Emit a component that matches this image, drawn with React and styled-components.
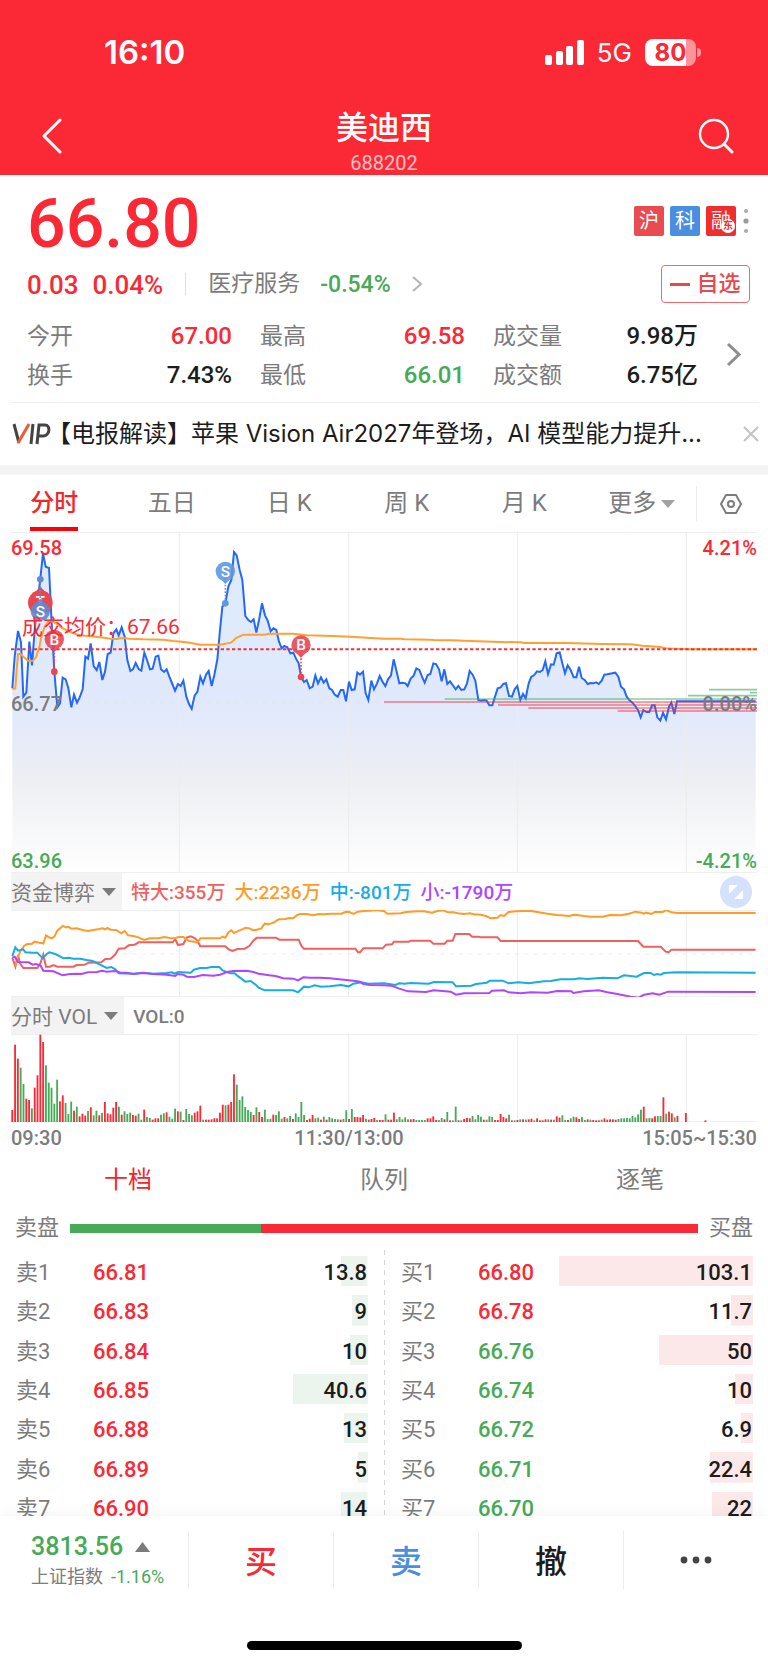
import React, { useState } from 'react';
import styled, { createGlobalStyle } from 'styled-components';

const RED = '#fa2935';
const GREEN = '#46aa58';
const GREY = '#7c7c7c';
const BLACK = '#1c1c1c';

const stats = [
  { label: '今开', value: '67.00', color: RED },
  { label: '最高', value: '69.58', color: RED },
  { label: '成交量', value: '9.98万', color: BLACK },
  { label: '换手', value: '7.43%', color: BLACK },
  { label: '最低', value: '66.01', color: GREEN },
  { label: '成交额', value: '6.75亿', color: BLACK },
];

const periods = ['分时', '五日', '日 K', '周 K', '月 K'];
const bookTabs = ['十档', '队列', '逐笔'];

const flows = [
  { text: '特大:355万', color: '#f0605f' },
  { text: '大:2236万', color: '#ff9b26' },
  { text: '中:-801万', color: '#16ace4' },
  { text: '小:-1790万', color: '#b045ff' },
];

const asks = [
  ['卖1', '66.81', 13.8, RED],
  ['卖2', '66.83', 9, RED],
  ['卖3', '66.84', 10, RED],
  ['卖4', '66.85', 40.6, RED],
  ['卖5', '66.88', 13, RED],
  ['卖6', '66.89', 5, RED],
  ['卖7', '66.90', 14, RED],
];

const bids = [
  ['买1', '66.80', 103.1, RED],
  ['买2', '66.78', 11.7, RED],
  ['买3', '66.76', 50, GREEN],
  ['买4', '66.74', 10, GREEN],
  ['买5', '66.72', 6.9, GREEN],
  ['买6', '66.71', 22.4, GREEN],
  ['买7', '66.70', 22, GREEN],
];

const MAX_LOT = 103.1;

// Chart series, three units to one css pixel
const pricePoints = '37,655 44,560 54,483 63,517 70,680 79,668 88,515 96,586 104,480 112,400 121,325 129,250 137,290 147,294 154,440 163,605 172,712 180,700 188,623 197,628 205,655 214,712 222,674 231,698 239,682 248,658 256,560 264,566 272,520 281,588 290,600 298,576 307,630 315,605 323,552 332,548 340,490 349,478 356,496 365,472 374,500 382,570 391,603 399,598 407,579 416,597 424,602 433,548 441,570 450,598 458,596 467,560 475,557 483,598 492,606 500,598 508,620 517,642 525,662 534,642 542,648 550,632 559,680 567,702 575,716 584,676 592,666 601,620 609,640 618,614 626,603 635,648 643,615 652,568 660,480 667,410 676,400 685,350 694,330 702,246 710,256 719,300 727,330 736,438 745,450 753,456 761,448 769,488 777,450 786,400 795,436 803,452 812,484 820,475 829,480 837,515 845,535 853,528 862,532 871,550 880,548 888,566 896,580 903,620 912,636 920,630 929,655 938,650 946,616 954,640 963,622 971,638 979,628 988,655 996,660 1004,674 1013,680 1022,660 1030,660 1038,694 1047,635 1055,660 1064,658 1072,608 1080,614 1089,605 1097,670 1105,690 1114,632 1122,658 1131,640 1139,618 1148,636 1156,648 1164,628 1173,616 1181,568 1190,605 1198,640 1207,638 1216,640 1223,648 1232,626 1241,617 1249,595 1258,600 1266,620 1274,638 1283,615 1291,612 1300,580 1308,582 1317,598 1325,634 1333,598 1342,642 1350,634 1358,645 1367,658 1375,648 1384,660 1393,658 1401,640 1409,603 1418,614 1426,632 1435,690 1443,692 1452,690 1460,692 1468,706 1477,706 1485,680 1493,655 1502,652 1510,642 1518,640 1527,678 1536,680 1544,658 1552,648 1561,690 1569,672 1577,685 1586,640 1594,620 1602,616 1611,604 1620,606 1628,600 1636,574 1644,612 1653,583 1661,584 1670,550 1679,547 1687,580 1695,610 1703,586 1712,600 1721,622 1729,622 1737,590 1745,624 1754,630 1763,642 1772,639 1780,640 1788,637 1796,642 1805,632 1813,614 1822,613 1846,608 1855,620 1863,650 1872,658 1880,680 1888,690 1897,698 1906,708 1914,720 1922,742 1930,720 1939,726 1948,726 1956,706 1964,706 1972,742 1981,752 1989,728 1998,748 2007,710 2014,698 2023,732 2031,694 2267,694';

const averagePoints = '37,657 46,655 50,600 54,552 62,552 72,562 84,572 98,573 108,562 118,532 124,500 134,470 146,454 156,454 168,460 186,474 210,486 240,496 272,499 300,502 332,506 350,507 365,504 390,506 430,508 490,509 520,513 545,515 570,518 600,524 660,524 693,518 708,504 730,494 795,494 806,491 880,491 920,496 1000,498 1050,500 1152,506 1202,506 1214,508 1292,509 1302,510 1357,511 1412,513 1502,516 1562,517 1572,519 1702,519 1807,522 1892,523 1927,527 1952,529 1980,531 1997,535 2022,536 2072,538 2271,538';

const flowSeries = [
  { color: '#f0605f', points: '37,773 46,800 54,765 60,790 70,804 112,804 121,790 130,764 138,800 150,800 160,795 172,800 220,800 230,795 254,794 266,788 304,787 316,777 332,776 346,763 356,746 374,745 386,736 404,734 416,727 518,727 526,718 534,735 550,732 560,713 572,709 584,714 592,722 601,739 676,739 686,748 697,753 712,747 734,746 748,738 760,722 770,713 828,713 838,719 896,719 904,738 912,746 1066,746 1074,757 1080,757 1090,745 1148,745 1158,734 1176,733 1182,725 1227,725 1232,722 1290,722 1300,731 1334,731 1342,722 1358,722 1366,702 1408,702 1416,710 1436,710 1442,712 1492,712 1502,723 1914,723 1930,740 1982,740 1997,755 2006,757 2014,749 2267,749' },
  { color: '#ff9b26', points: '45,800 54,770 62,752 72,738 80,733 96,731 104,725 118,728 130,730 138,706 147,712 155,715 163,710 172,692 180,685 189,678 197,682 206,681 214,686 230,685 248,690 264,693 280,690 298,687 308,685 316,688 322,684 332,689 348,690 364,700 374,693 384,706 400,708 415,712 432,720 450,715 476,715 492,711 510,714 524,715 535,711 550,711 565,722 580,725 592,728 601,715 660,715 668,710 676,713 686,696 694,691 702,699 712,694 726,688 737,683 748,685 758,690 768,690 784,685 794,671 806,673 822,667 836,658 856,657 868,654 880,655 890,646 900,642 920,642 940,646 956,642 972,643 990,641 1024,641 1036,636 1046,635 1060,642 1074,635 1090,633 1110,632 1124,630 1152,633 1162,641 1202,640 1218,636 1252,634 1272,634 1296,638 1312,633 1330,631 1344,637 1360,637 1374,640 1392,642 1410,640 1422,643 1442,644 1458,648 1472,655 1492,653 1502,645 1512,648 1526,636 1547,634 1588,632 1612,636 1642,641 1672,645 1708,648 1722,644 1736,646 1752,648 1772,650 1808,650 1830,645 1862,646 1887,641 1907,635 1924,638 1932,641 1938,638 1954,642 1964,636 1988,636 1999,630 2014,637 2032,639 2267,639' },
  { color: '#16ace4', points: '37,768 46,742 54,752 70,748 76,757 98,758 112,758 128,775 140,762 148,757 166,762 180,769 190,775 206,773 220,776 240,776 260,780 278,783 300,794 320,804 334,801 346,808 356,820 400,821 430,818 460,821 500,819 516,817 524,821 534,816 572,818 582,809 600,804 620,804 634,801 658,801 668,811 690,820 704,820 712,827 736,845 752,843 768,855 776,863 794,871 880,871 894,877 912,860 926,862 944,856 964,860 990,859 1022,855 1046,859 1060,851 1084,847 1106,851 1152,850 1186,855 1198,850 1214,851 1232,849 1286,851 1302,846 1358,847 1368,859 1414,857 1428,852 1460,848 1470,842 1508,842 1526,850 1556,847 1586,850 1632,844 1652,843 1682,838 1722,838 1738,835 1762,837 1808,833 1852,835 1872,826 1910,830 1932,819 1952,819 1962,825 1972,822 1982,824 1992,819 2028,817 2267,818' },
  { color: '#b045ff', points: '37,773 44,770 54,786 86,787 98,794 108,792 122,797 130,812 160,814 188,826 210,822 232,821 244,822 264,817 290,816 306,812 320,815 346,813 362,818 380,818 400,822 430,819 460,822 500,824 526,828 532,822 550,824 560,830 582,831 608,825 640,827 660,824 684,815 700,813 740,812 760,816 776,821 808,826 826,828 850,835 880,836 894,841 910,832 930,833 960,833 990,835 1010,837 1060,842 1080,845 1090,852 1110,855 1152,856 1174,857 1198,866 1224,874 1278,876 1302,871 1352,875 1368,884 1392,880 1468,879 1476,872 1512,871 1526,877 1562,880 1592,877 1642,878 1672,873 1714,874 1720,879 1752,874 1796,871 1822,877 1852,882 1892,890 1916,893 1932,884 1958,880 1978,884 2004,875 2267,876' },
];

// One bar per minute: r = up, g = down, followed by the bar height
const volumes = (
  'r36 r232 r190 g163 g114 r70 r66 g41 r103 r140 r262 r240 g170 g118 g103 g55 g127 r62 r80 g57 g24 g61 r34 g46 r17 r25 r19 g33 r44 g20 ' +
  'g34 r20 g27 r60 r26 r23 r43 r60 g46 r22 g32 g24 g28 r21 r19 g25 g7 r37 g15 g12 r7 r11 r11 g22 g26 r29 g16 g10 g40 r32 ' +
  'g31 r6 g39 g24 g20 r28 r32 r49 g7 r7 r7 r8 r11 r11 r28 r52 g50 r52 r60 r143 g112 g66 g77 g45 g36 g30 r21 g44 r30 r15 ' +
  'g37 g9 g10 r22 g21 g32 g10 r15 g11 g18 r9 g26 g15 g60 g21 r6 r10 r21 g11 g13 r7 g16 r7 g15 g11 g9 g8 r7 g9 g35 ' +
  'r9 g39 r15 r15 r14 r21 g10 r7 r9 r12 g6 r6 r6 g23 r7 r7 r28 g8 g15 g8 g14 g8 r8 r9 g6 g6 g6 g6 r11 r11 ' +
  'r17 r6 g6 g12 r8 g30 r5 g5 g46 r5 g5 r9 r12 r11 g18 g8 g21 g16 r7 g7 g17 g15 r6 r6 r24 r15 r11 g22 r5 g5 ' +
  'r6 g8 r8 g7 r8 r10 g5 r11 r5 r5 r8 g8 r7 g7 r17 r13 g20 g6 r6 g11 g16 r14 r9 g15 g6 r8 g7 r6 r5 r5 ' +
  'g7 r11 r7 r8 r8 r7 g9 g11 g11 g12 g11 g18 g14 g23 g37 r46 g11 g12 r11 r17 g18 g18 r74 g25 r31 r26 g14 r18 r0 r0 ' +
  'r27 r0 r0 r0 r0 r0 r0 r5'
).split(' ');

const depthLines = [
  { x: 2127, y: 659, color: GREEN },
  { x: 2250, y: 668, color: GREEN },
  { x: 2064, y: 677, color: GREEN },
  { x: 1334, y: 687, color: GREEN },
  { x: 1152, y: 696, color: RED },
  { x: 1494, y: 705, color: RED },
  { x: 1585, y: 714, color: RED },
  { x: 1853, y: 723, color: RED },
];

const GlobalStyle = createGlobalStyle`
  *, *::before, *::after {
    box-sizing: border-box;
  }

  html, body {
    margin: 0;
    background: #fff;
    font-family: Roboto, "Noto Sans CJK SC", sans-serif;
    color: ${BLACK};
  }

  button {
    padding: 0;
    border: none;
    background: none;
    font: inherit;
    color: inherit;
    cursor: pointer;
  }

  svg {
    display: block;
  }
`;

const Page = styled.div`
  display: flex;
  flex-direction: column;
  height: 100vh;
`;

const Header = styled.header`
  flex: none;
  background: ${RED};
  color: #fff;
`;

const StatusBar = styled.div`
  display: flex;
  align-items: center;
  justify-content: space-between;
  height: 104px;
  padding: 0 67px 0 104px;
  font-family: Inter, sans-serif;
`;

const Clock = styled.span`
  font-size: 33px;
  font-weight: 600;
`;

const StatusIcons = styled.div`
  display: flex;
  align-items: center;
  gap: 13px;
  font-size: 26px;
`;

const Battery = styled.div`
  display: flex;
  align-items: center;
  gap: 1px;
`;

const BatteryBody = styled.span`
  display: flex;
  align-items: center;
  justify-content: center;
  width: 51px;
  height: 27px;
  border-radius: 8px;
  background: linear-gradient(to right, #fff 80%, rgba(255, 255, 255, 0.5) 80%);
  color: ${RED};
  font-size: 24px;
  font-weight: 700;
`;

const BatteryTip = styled.span`
  width: 4px;
  height: 9px;
  border-radius: 0 4px 4px 0;
  background: rgba(255, 255, 255, 0.5);
`;

const NavBar = styled.div`
  display: grid;
  grid-template-columns: 60px 1fr 60px;
  padding: 0 22px 3px;
`;

const NavButton = styled.button`
  display: flex;
  align-items: center;
  justify-content: center;
  height: 64px;
`;

const NavTitle = styled.div`
  padding-top: 4px;
  text-align: center;
`;

const StockName = styled.h1`
  margin: 0;
  font-size: 32px;
  font-weight: 500;
  line-height: 40px;
`;

const StockCode = styled.div`
  height: 24px;
  padding-top: 3px;
  font-size: 20px;
  line-height: 24px;
  opacity: 0.7;
`;

const Content = styled.main`
  flex: 1;
  min-height: 0;
  overflow-y: auto;
  scrollbar-width: none;
`;

const Quote = styled.section`
  padding: 0 18px 0 27px;
`;

const QuoteTop = styled.div`
  display: flex;
  align-items: center;
  justify-content: space-between;
  height: 90px;
`;

const Price = styled.div`
  padding-top: 8px;
  font-size: 68px;
  font-weight: 500;
  line-height: 82px;
  color: ${RED};
`;

const Badges = styled.div`
  display: flex;
  align-items: center;
  gap: 6px;
  padding-top: 2px;
`;

const Badge = styled.span`
  position: relative;
  width: 30px;
  height: 30px;
  border-radius: 2px;
  background: ${({ $color }) => $color};
  color: #fff;
  font-size: 20px;
  line-height: 30px;
  text-align: center;
`;

const BadgeMark = styled.span`
  position: absolute;
  right: 1px;
  bottom: 3px;
  width: 14px;
  height: 14px;
  border-radius: 50%;
  background: #fff;
  color: #f02e2e;
  font-size: 10px;
  font-weight: 700;
  line-height: 14px;
`;

const MoreDots = styled.button`
  display: flex;
  justify-content: center;
  width: 8px;
`;

const ChangeRow = styled.div`
  display: flex;
  align-items: center;
  height: 38px;
`;

const Change = styled.span`
  margin-right: 14px;
  padding-top: 2px;
  font-size: 26px;
  font-weight: 500;
  color: ${RED};
`;

const Sector = styled.a`
  display: flex;
  align-items: center;
  gap: 20px;
  margin-left: 8px;
  padding-left: 23px;
  background: linear-gradient(#ddd, #ddd) left / 1px 22px no-repeat;
  color: ${GREY};
  font-size: 23px;
  line-height: 32px;
  text-decoration: none;
`;

const SectorChange = styled.span`
  padding-top: 2px;
  color: ${GREEN};
  font-weight: 500;
`;

const WatchButton = styled.button`
  display: flex;
  align-items: center;
  justify-content: center;
  gap: 6px;
  width: 89px;
  height: 38px;
  margin-left: auto;
  border: 1px solid #ee6a6e;
  border-radius: 4px;
  color: #e9484e;
  font-size: 22px;
  font-weight: 500;
  line-height: 36px;
`;

const StatsRow = styled.div`
  display: grid;
  grid-template-columns: 1fr 52px;
  align-items: center;
  padding: 12px 0 9px;
`;

const Stats = styled.dl`
  display: grid;
  grid-template-columns: repeat(3, 1fr);
  column-gap: 28px;
  margin: 0;
`;

const Stat = styled.div`
  display: flex;
  justify-content: space-between;
  height: 39px;
  padding-top: 2px;
  font-size: 23px;
  line-height: 39px;

  dt {
    color: ${GREY};
  }

  dd {
    margin: 0;
    font-size: 24px;
    font-weight: 500;
    color: ${({ $color }) => $color};
  }
`;

const StatsMore = styled.button`
  display: flex;
  justify-content: flex-end;
  padding-right: 9px;
`;

const News = styled.div`
  display: flex;
  align-items: center;
  height: 63px;
  margin: 0 9px 0 11px;
  border-top: 1px solid #efefef;
`;

const NewsLink = styled.a`
  flex: 1;
  overflow: hidden;
  margin: 0 22px 0 -4px;
  font-family: Inter, "Noto Sans CJK SC", sans-serif;
  font-size: 24px;
  line-height: 36px;
  white-space: nowrap;
  text-overflow: ellipsis;
  color: ${BLACK};
  text-decoration: none;
`;

const Band = styled.div`
  height: 10px;
  background: #f4f4f4;
`;

const PeriodBar = styled.nav`
  display: grid;
  grid-template-columns: 1fr 72px;
  height: 57px;
`;

const Periods = styled.div`
  display: grid;
  grid-template-columns: repeat(6, 1fr);
  column-gap: 9px;
`;

const Period = styled.button`
  display: flex;
  align-items: center;
  justify-content: center;
  gap: 5px;
  font-size: 24px;
  font-weight: ${({ $active }) => ($active ? 500 : 400)};
  color: ${({ $active }) => ($active ? '#f2252b' : GREY)};

  span {
    align-self: stretch;
    height: 56px;
    padding-top: 4px;
    border-bottom: 4px solid ${({ $active }) => ($active ? '#fc0006' : 'transparent')};
    line-height: 48px;
  }
`;

const Settings = styled.button`
  display: flex;
  align-items: center;
  justify-content: center;
  margin: 11px 0;
  padding-right: 4px;
  border-left: 1px solid #ececec;
`;

const ChartBlock = styled.section`
  margin: 0 11px;
`;

const PriceChart = styled.div`
  position: relative;

  svg {
    width: 100%;
    height: 341px;
  }
`;

const AxisLabel = styled.span`
  position: absolute;
  ${({ $side }) => $side}: 0;
  ${({ $edge }) => $edge};
  font-size: 20px;
  font-weight: 500;
  line-height: 24px;
  color: ${({ $color }) => $color};
`;

const CostLabel = styled.span`
  position: absolute;
  left: 11px;
  top: 81px;
  font-size: 21px;
  line-height: 28px;
  color: ${RED};
`;

const IndicatorRow = styled.div`
  display: flex;
  align-items: center;
  gap: 9px;
  height: 37px;
  padding-right: 5px;
  font-size: 19px;
`;

const IndicatorPicker = styled.button`
  display: flex;
  align-items: center;
  gap: 7px;
  align-self: stretch;
  padding-right: 6px;
  background: #f3f3f3;
  color: ${GREY};
  font-size: 21px;
  line-height: 36px;

  span {
    padding-top: 2px;
  }
`;

const FlowItem = styled.span`
  padding-top: 2px;
  font-weight: 500;
  line-height: 36px;
  color: ${({ $color }) => $color};
`;

const ExpandButton = styled.button`
  margin-left: auto;
`;

const SubChart = styled.svg`
  width: 100%;
  height: ${({ $height }) => $height}px;
`;

const TimeAxis = styled.div`
  display: flex;
  justify-content: space-between;
  padding-top: 1px;
  font-size: 20px;
  font-weight: 500;
  line-height: 30px;
  color: ${GREY};

  span {
    flex: 1;
  }

  span:nth-child(2) {
    padding-right: 70px;
    text-align: center;
  }

  span:nth-child(3) {
    text-align: right;
  }
`;

const BookTabs = styled.nav`
  display: grid;
  grid-template-columns: repeat(3, 1fr);
`;

const BookTab = styled.button`
  font-size: 24px;
  line-height: 54px;
  color: ${({ $active }) => ($active ? '#f2252b' : GREY)};
`;

const RatioRow = styled.div`
  display: flex;
  align-items: center;
  gap: 11px;
  padding: 2px 15px 0;
  font-size: 22px;
  line-height: 38px;
  color: ${GREY};
`;

const RatioBar = styled.div`
  display: flex;
  flex: 1;
  height: 9px;
  background: ${RED};
`;

const RatioSell = styled.div`
  background: ${GREEN};
`;

const Book = styled.section`
  display: grid;
  grid-template-columns: 1fr 1px 1fr;
  column-gap: 16px;
  padding: 0 15px 0 16px;
`;

const BookDivider = styled.div`
  margin-top: 3px;
  background: repeating-linear-gradient(#d6d6d6 0 5px, transparent 5px 10px);
`;

const BookTable = styled.table`
  width: 100%;
  height: 284px;
  table-layout: fixed;
  border-collapse: separate;
  border-spacing: 0 9px;
  font-size: 22px;
  line-height: 26px;

  th, td {
    height: 30px;
    padding: 4px 0 0;
    text-align: left;
  }

  th {
    width: 77px;
    font-weight: 400;
    color: ${GREY};
  }
`;

const PriceCell = styled.td`
  font-weight: 500;
  color: ${({ $color }) => $color};
`;

const LotCell = styled.td`
  width: 58%;
  background: linear-gradient(${({ $tint }) => `${$tint}, ${$tint}`}) right / ${({ $share }) => $share}% 100% no-repeat;

  && {
    padding-right: 1px;
    text-align: right;
    font-weight: 500;
  }
`;

const Footer = styled.footer`
  position: relative;
  flex: none;
  background: #fff;
  box-shadow: 0 -4px 12px rgba(0, 0, 0, 0.04);
`;

const Actions = styled.div`
  display: grid;
  grid-template-columns: 188px repeat(4, 1fr);
  padding: 15px 0 52px;
`;

const IndexQuote = styled.a`
  height: 58px;
  padding-left: 31px;
  color: ${GREEN};
  font-size: 18px;
  line-height: 28px;
  text-decoration: none;
`;

const IndexValue = styled.div`
  display: flex;
  align-items: center;
  gap: 12px;
  font-size: 25px;
  font-weight: 500;
  line-height: 32px;
`;

const IndexName = styled.span`
  margin-right: 8px;
  color: ${GREY};
`;

const Action = styled.button`
  display: flex;
  align-items: center;
  justify-content: center;
  border-left: 1px solid #ededed;
  font-size: 32px;
  font-weight: 500;
  line-height: 54px;
  color: ${({ $color }) => $color};

  span {
    padding-top: 4px;
  }
`;

const HomeIndicator = styled.div`
  width: 275px;
  height: 9px;
  margin: 0 auto 15px;
  border-radius: 5px;
  background: #000;
`;

const Chevron = ({ width, height, stroke, color }) => (
  <svg width={width} height={height} viewBox={`0 0 ${width} ${height}`} fill="none">
    <path d={`M2 2L${width - 2} ${height / 2}L2 ${height - 2}`} stroke={color} strokeWidth={stroke} />
  </svg>
);

const Caret = ({ color = GREY }) => (
  <svg width="14" height="8" viewBox="0 0 14 8">
    <path d="M0 0H14L7 8Z" fill={color} />
  </svg>
);

const gridXs = [538, 1046, 1552, 2059];

const Grid = ({ top, bottom }) => (
  <g stroke="#ececec" strokeWidth="3">
    <path d={`M33 ${top}H2271M33 ${bottom}H2271`} />
    {gridXs.map((x) => (
      <path key={x} d={`M${x} ${top}V${bottom}`} />
    ))}
  </g>
);

// Trade marker: a pin with a letter, tied to its price dot by a dotted line
const Marker = ({ x, y, dot, letter, color }) => {
  const dir = dot > y ? 1 : -1;
  return (
    <g>
      <path d={`M${x} ${y}V${dot}`} stroke={color} strokeWidth="5" strokeDasharray="5 5" />
      <circle cx={x} cy={dot} r="10" fill={color} />
      <g opacity="0.9">
        <circle cx={x} cy={y} r="29" fill={color} />
        <path d={`M${x - 20} ${y + 18 * dir}L${x} ${y + 38 * dir}L${x + 20} ${y + 18 * dir}Z`} fill={color} />
      </g>
      <text x={x} y={y + 16} fill="#fff" fontSize="46" fontWeight="500" textAnchor="middle">
        {letter}
      </text>
    </g>
  );
};

const OrderTable = ({ rows, tint, label }) => (
  <BookTable aria-label={label}>
    <tbody>
      {rows.map(([name, price, lots, color]) => (
        <tr key={name}>
          <th scope="row">{name}</th>
          <PriceCell $color={color}>{price}</PriceCell>
          <LotCell $tint={tint} $share={Math.round((lots / MAX_LOT) * 95)}>{lots}</LotCell>
        </tr>
      ))}
    </tbody>
  </BookTable>
);

const App = () => {
  const [period, setPeriod] = useState('分时');
  const [bookTab, setBookTab] = useState('十档');

  return (
    <>
      <GlobalStyle />
      <Page>
        <Header>
          <StatusBar>
            <Clock>16:10</Clock>
            <StatusIcons>
              <svg width="39" height="25" viewBox="0 0 39 25" fill="#fff">
                <rect x="0" y="15" width="7" height="10" rx="2" />
                <rect x="11" y="11" width="7" height="14" rx="2" />
                <rect x="21" y="6" width="7" height="19" rx="2" />
                <rect x="32" y="0" width="7" height="25" rx="2" />
              </svg>
              <span>5G</span>
              <Battery>
                <BatteryBody>80</BatteryBody>
                <BatteryTip />
              </Battery>
            </StatusIcons>
          </StatusBar>
          <NavBar>
            <NavButton aria-label="返回">
              <svg width="22" height="36" viewBox="0 0 22 36" fill="none">
                <path d="M19 2L3 18L19 34" stroke="#fff" strokeWidth="3" strokeLinecap="round" strokeLinejoin="round" />
              </svg>
            </NavButton>
            <NavTitle>
              <StockName>美迪西</StockName>
              <StockCode>688202</StockCode>
            </NavTitle>
            <NavButton aria-label="搜索">
              <svg width="36" height="36" viewBox="0 0 36 36" fill="none" stroke="#fff" strokeLinecap="round">
                <circle cx="16" cy="16" r="14" strokeWidth="2.4" />
                <path d="M26 26L34 34" strokeWidth="3" />
              </svg>
            </NavButton>
          </NavBar>
        </Header>

        <Content>
          <Quote>
            <QuoteTop>
              <Price>66.80</Price>
              <Badges>
                <Badge $color="#e94b50">沪</Badge>
                <Badge $color="#4a8ee2">科</Badge>
                <Badge $color="#f02e2e">融<BadgeMark>东</BadgeMark></Badge>
                <MoreDots aria-label="更多标签">
                  <svg width="6" height="24" viewBox="0 0 6 24" fill="#aaa">
                    <circle cx="3" cy="2" r="2" />
                    <circle cx="3" cy="12" r="2.6" fill="#999" />
                    <circle cx="3" cy="22" r="2" />
                  </svg>
                </MoreDots>
              </Badges>
            </QuoteTop>
            <ChangeRow>
              <Change>0.03</Change>
              <Change>0.04%</Change>
              <Sector href="#sector">
                <span>医疗服务</span>
                <SectorChange>-0.54%</SectorChange>
                <Chevron width={12} height={18} stroke={2} color="#b5b5b5" />
              </Sector>
              <WatchButton>
                <svg width="20" height="3" viewBox="0 0 20 3">
                  <path d="M0 0H20V3H0Z" fill="#e9484e" />
                </svg>
                自选
              </WatchButton>
            </ChangeRow>
            <StatsRow>
              <Stats>
                {stats.map((item) => (
                  <Stat key={item.label} $color={item.color}>
                    <dt>{item.label}</dt>
                    <dd>{item.value}</dd>
                  </Stat>
                ))}
              </Stats>
              <StatsMore aria-label="更多数据">
                <Chevron width={15} height={25} stroke={3} color="#8e8e8e" />
              </StatsMore>
            </StatsRow>
          </Quote>

          <News>
            <svg width="40" height="22" viewBox="0 0 40 22" fill="none" strokeWidth="3">
              <path d="M3 1L8 20" stroke="#444" />
              <path d="M7 20L18 1" stroke="#f05a38" />
              <path d="M22 1L20 21" stroke="#444" />
              <path d="M26 21L28 2H34C40 2 39 13 32 13H27" stroke="#444" />
            </svg>
            <NewsLink href="#news">【电报解读】苹果 Vision Air2027年登场，AI 模型能力提升...</NewsLink>
            <button aria-label="关闭">
              <svg width="16" height="16" viewBox="0 0 16 16" fill="none">
                <path d="M1 1L15 15M15 1L1 15" stroke="#c4c4c4" strokeWidth="2" />
              </svg>
            </button>
          </News>
          <Band />

          <PeriodBar>
            <Periods>
              {periods.map((name) => (
                <Period key={name} $active={name === period} onClick={() => setPeriod(name)}>
                  <span>{name}</span>
                </Period>
              ))}
              <Period>
                <span>更多</span>
                <Caret color="#a2a2a2" />
              </Period>
            </Periods>
            <Settings aria-label="设置">
              <svg width="22" height="20" viewBox="0 0 22 20" fill="none" stroke="#7c7c7c" strokeWidth="2">
                <path d="M6 1H16L21 10L16 19H6L1 10Z" strokeLinejoin="round" />
                <circle cx="11" cy="10" r="3" />
              </svg>
            </Settings>
          </PeriodBar>

          <ChartBlock>
            <PriceChart>
              <svg viewBox="33 186 2238 1023" preserveAspectRatio="none" fill="none">
                <defs>
                  <linearGradient id="area" gradientUnits="userSpaceOnUse" x1="0" y1="600" x2="0" y2="1209">
                    <stop offset="0" stopColor="#e0eafd" />
                    <stop offset="0.2" stopColor="#e1e9fb" />
                    <stop offset="0.55" stopColor="#eeeff3" />
                    <stop offset="1" stopColor="#ffffff" />
                  </linearGradient>
                </defs>
                <polygon points={`37,1209 ${pricePoints} 2267,1209`} fill="url(#area)" />
                <Grid top={187} bottom={1208} />
                <path d="M33 698H2271" stroke="#e2e4ea" strokeWidth="3" strokeDasharray="12 16" />
                <polyline points={pricePoints} stroke="#2468fb" strokeWidth="6" />
                <polyline points={averagePoints} stroke="#ffa033" strokeWidth="6" />
                <path d="M33 538H2271" stroke="#f0323c" strokeWidth="6" strokeDasharray="10 7" />
                {depthLines.map((line) => (
                  <path key={line.y} d={`M${line.x} ${line.y}H2271`} stroke={line.color} strokeWidth="5" opacity="0.6" />
                ))}
                <circle cx="121" cy="398" r="37" fill="#e8474f" />
                <path d="M97 374L121 350L145 374Z" fill="#e8474f" />
                <text x="121" y="412" fill="#fff" fontSize="44" fontWeight="700" textAnchor="middle">T</text>
                <Marker x={121} y={424} dot={328} letter="S" color="#5f8bd2" />
                <Marker x={163} y={508} dot={605} letter="B" color="#ea4650" />
                <Marker x={676} y={304} dot={400} letter="S" color="#5f97e3" />
                <Marker x={903} y={525} dot={621} letter="B" color="#ea4650" />
              </svg>
              <AxisLabel $side="left" $edge="top: 4px" $color={RED}>69.58</AxisLabel>
              <AxisLabel $side="right" $edge="top: 4px" $color={RED}>4.21%</AxisLabel>
              <AxisLabel $side="left" $edge="top: 160px" $color={GREY}>66.77</AxisLabel>
              <AxisLabel $side="right" $edge="top: 160px" $color={GREY}>0.00%</AxisLabel>
              <AxisLabel $side="left" $edge="bottom: 0" $color={GREEN}>63.96</AxisLabel>
              <AxisLabel $side="right" $edge="bottom: 0" $color={GREEN}>-4.21%</AxisLabel>
              <CostLabel>成交均价：67.66</CostLabel>
            </PriceChart>

            <IndicatorRow>
              <IndicatorPicker>
                <span>资金博弈</span>
                <Caret />
              </IndicatorPicker>
              {flows.map((flow) => (
                <FlowItem key={flow.text} $color={flow.color}>{flow.text}</FlowItem>
              ))}
              <ExpandButton aria-label="放大">
                <svg width="32" height="32" viewBox="0 0 32 32">
                  <circle cx="16" cy="16" r="16" fill="#d3e0fe" />
                  <path d="M9 9H18L9 18ZM23 14V23H14Z" fill="#fff" />
                </svg>
              </ExpandButton>
            </IndicatorRow>
            <SubChart $height={87} viewBox="33 630 2238 261" preserveAspectRatio="none" fill="none">
              <Grid top={631} bottom={890} />
              <path d="M33 762H2271" stroke="#ececec" strokeWidth="3" strokeDasharray="12 16" />
              {flowSeries.map((series) => (
                <polyline key={series.color} points={series.points} stroke={series.color} strokeWidth="6" />
              ))}
            </SubChart>

            <IndicatorRow>
              <IndicatorPicker>
                <span>分时 VOL</span>
                <Caret />
              </IndicatorPicker>
              <FlowItem $color={GREY}>VOL:0</FlowItem>
            </IndicatorRow>
            <SubChart $height={88} viewBox="33 131 2238 264" preserveAspectRatio="none">
              <Grid top={133} bottom={394} />
              {volumes.map((bar, i) => {
                const size = Number(bar.slice(1));
                return (
                  <rect
                    key={i}
                    x={34 + i * 8.42}
                    y={395 - size}
                    width="5.5"
                    height={size}
                    fill={bar[0] === 'r' ? RED : GREEN}
                  />
                );
              })}
            </SubChart>
            <TimeAxis>
              <span>09:30</span>
              <span>11:30/13:00</span>
              <span>15:05~15:30</span>
            </TimeAxis>
          </ChartBlock>

          <BookTabs>
            {bookTabs.map((name) => (
              <BookTab key={name} $active={name === bookTab} onClick={() => setBookTab(name)}>
                {name}
              </BookTab>
            ))}
          </BookTabs>
          <RatioRow>
            <span>卖盘</span>
            <RatioBar>
              <RatioSell style={{ width: `${(asks.length / 23) * 100}%` }} />
            </RatioBar>
            <span>买盘</span>
          </RatioRow>
          <Book>
            <OrderTable rows={asks} tint="#ebf5ed" label="卖盘" />
            <BookDivider />
            <OrderTable rows={bids} tint="#fde8e9" label="买盘" />
          </Book>
        </Content>

        <Footer>
          <Actions>
            <IndexQuote href="#index">
              <IndexValue>
                3813.56
                <svg width="15" height="10" viewBox="0 0 15 10">
                  <path d="M7.5 0L15 10H0Z" fill="#7c7c7c" />
                </svg>
              </IndexValue>
              <IndexName>上证指数</IndexName>
              -1.16%
            </IndexQuote>
            <Action $color={RED}><span>买</span></Action>
            <Action $color="#4a8ee2"><span>卖</span></Action>
            <Action $color={BLACK}><span>撤</span></Action>
            <Action $color="#444" aria-label="更多">
              <svg width="32" height="8" viewBox="0 0 32 8" fill="#444">
                <circle cx="4" cy="4" r="3.4" />
                <circle cx="16" cy="4" r="3.4" />
                <circle cx="28" cy="4" r="3.4" />
              </svg>
            </Action>
          </Actions>
          <HomeIndicator />
        </Footer>
      </Page>
    </>
  );
};

export default App;
